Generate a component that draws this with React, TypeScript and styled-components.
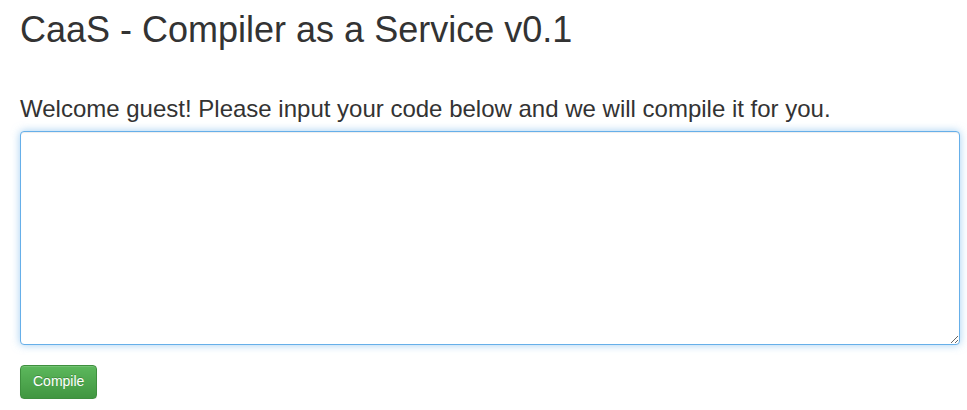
import * as React from "react";
import styled, { createGlobalStyle } from "styled-components";

const GlobalStyle = createGlobalStyle`
  html, body {
    margin: 0;
    padding: 0;
    background: #fff;
  }
  body {
    font-family: "Liberation Sans", Arial, Helvetica, sans-serif;
    font-size: 14px;
    line-height: 1.42857;
    color: #333;
  }
  * {
    box-sizing: border-box;
  }
`;

const Page = styled.div`
  padding: 10px 20px 0 20px;
  width: 100%;
`;

const Title = styled.h1`
  font-size: 36px;
  font-weight: 400;
  line-height: 1.1;
  margin: 0 0 42px 0;
`;

const Lead = styled.p`
  font-size: 24px;
  font-weight: 300;
  line-height: 1.4;
  margin: 0 0 6px 0;
`;

const CodeArea = styled.textarea`
  display: block;
  width: 940px;
  height: 214px;
  padding: 6px 12px;
  font-family: inherit;
  font-size: 14px;
  color: #555;
  background: #fff;
  border: 1px solid #66afe9;
  border-radius: 4px;
  outline: 0;
  box-shadow: inset 0 1px 1px rgba(0, 0, 0, 0.075),
    0 0 8px rgba(102, 175, 233, 0.6);
  resize: vertical;
`;

const Actions = styled.div`
  padding-top: 20px;
`;

const SuccessButton = styled.button`
  display: inline-block;
  padding: 6px 12px;
  font-family: inherit;
  font-size: 14px;
  line-height: 1.42857;
  color: #fff;
  text-shadow: 0 -1px 0 rgba(0, 0, 0, 0.2);
  background-image: linear-gradient(to bottom, #5cb85c 0, #419641 100%);
  border: 1px solid #3e8f3e;
  border-radius: 4px;
  box-shadow: inset 0 1px 0 rgba(255, 255, 255, 0.15),
    0 1px 1px rgba(0, 0, 0, 0.075);
  cursor: pointer;
`;

export default function App() {
  return (
    <>
      <GlobalStyle />
      <Page>
        <Title>CaaS - Compiler as a Service v0.1</Title>
        <Lead>
          Welcome guest! Please input your code below and we will compile it
          for you.
        </Lead>
        <CodeArea />
        <Actions>
          <SuccessButton>Compile</SuccessButton>
        </Actions>
      </Page>
    </>
  );
}
